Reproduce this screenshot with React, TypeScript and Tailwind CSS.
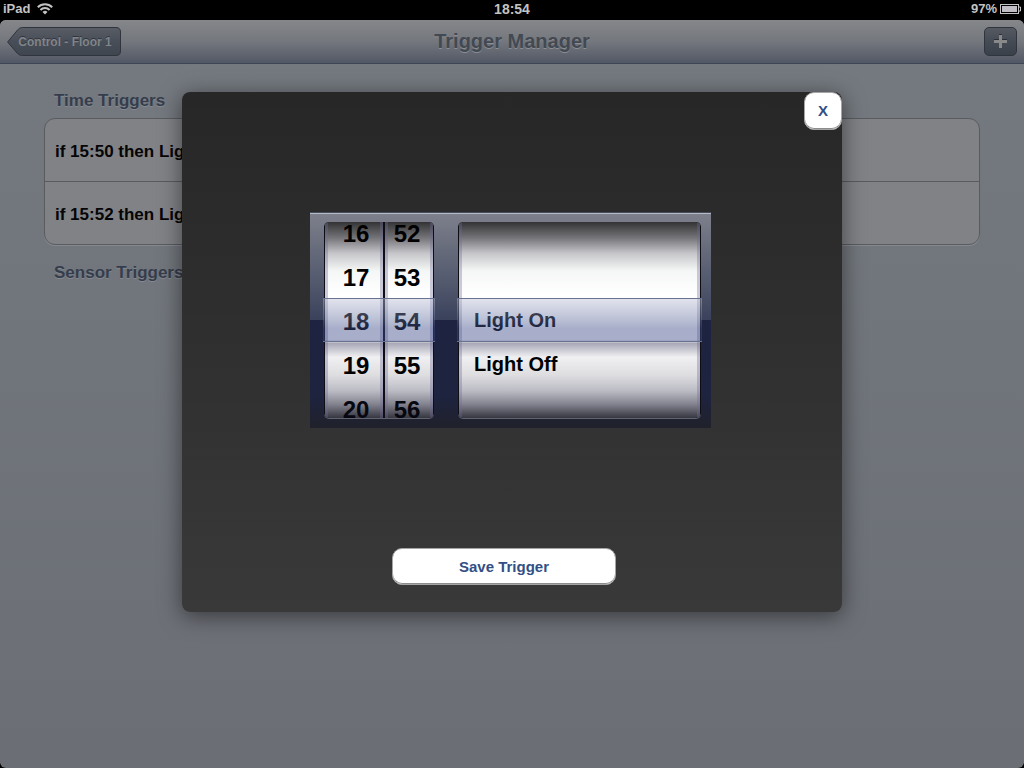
import React, { useState } from "react";

const hours = Array.from({ length: 24 }, (_, i) => String(i).padStart(2, "0"));
const minutes = Array.from({ length: 60 }, (_, i) => String(i).padStart(2, "0"));
const actions = ["Light On", "Light Off"];
const timeTriggers = ["if 15:50 then Light On", "if 15:52 then Light Off"];

function StatusBar() {
  return (
    <div className="flex h-5 items-center bg-black px-[3px] pb-0.5 text-[13px] leading-4 font-bold text-[#c3c3c3]">
      <div className="flex flex-1 items-center gap-[7px]">
        <span>iPad</span>
        <svg width="16" height="12" viewBox="0 0 16 12" fill="none" stroke="#c3c3c3" aria-label="Wi-Fi">
          <path d="M0.8 4.3a10.2 10.2 0 0 1 14.4 0" strokeWidth="2" />
          <path d="M3.4 7a6.5 6.5 0 0 1 9.2 0" strokeWidth="2" />
          <path d="M8 11.6L5.5 9.1a3.5 3.5 0 0 1 5 0Z" fill="#c3c3c3" stroke="none" />
        </svg>
      </div>
      <span className="text-sm leading-4">18:54</span>
      <div className="flex flex-1 items-center justify-end gap-[3px]">
        <span>97%</span>
        <svg width="21" height="10" viewBox="0 0 21 10" aria-label="Battery">
          <rect x="0.5" y="0.5" width="18" height="9" fill="none" stroke="#c3c3c3" />
          <rect x="2" y="2" width="15" height="6" fill="#c0bdc5" />
          <path d="M19 3h1.5v4H19" fill="none" stroke="#c3c3c3" />
        </svg>
      </div>
    </div>
  );
}

function NavBar() {
  return (
    <header className="flex h-11 items-center rounded-t-md border-b border-[#3d4454] bg-linear-to-b from-[#85878a] via-[#74777d] to-[#525866] px-[7px]">
      <div className="flex flex-1">
        <button className="relative h-[30px] w-[114px] pl-0.5 text-xs font-bold text-[#81858a] [text-shadow:0_-1px_0_#30363f]">
          <svg className="absolute inset-0" width="114" height="30" viewBox="0 0 114 30" aria-hidden="true">
            <defs>
              <linearGradient id="back" x1="0" y1="0" x2="0" y2="1">
                <stop offset="0" stopColor="#595d65" />
                <stop offset="0.5" stopColor="#484e58" />
                <stop offset="1" stopColor="#40464f" />
              </linearGradient>
            </defs>
            <path
              d="M0.6 15L10.5 3Q12.4 0.5 15.5 0.5H109Q113.5 0.5 113.5 5V24Q113.5 28.5 109 28.5H15.5Q12.4 28.5 10.5 26.5Z"
              fill="url(#back)"
              stroke="#30343c"
            />
          </svg>
          <span className="relative">Control - Floor 1</span>
        </button>
      </div>
      <h1 className="pb-0.5 text-xl leading-none font-bold text-[#424952] [text-shadow:0_1px_0_#8b8e94]">Trigger Manager</h1>
      <div className="flex flex-1 justify-end">
        <button
          aria-label="Add trigger"
          className="flex h-[29px] w-[33px] items-center justify-center rounded-[5px] border border-[#30343c] bg-linear-to-b from-[#555961] via-[#454b55] to-[#3b414a]"
        >
          <svg width="15" height="15" viewBox="0 0 15 15" aria-hidden="true">
            <path d="M6 0h3v1H6ZM1 5h5v1H1ZM9 5h5v1H9Z" fill="#2b3038" />
            <path d="M6 1h3v5h5v3H9v5H6V9H1V6h5Z" fill="#898989" />
          </svg>
        </button>
      </div>
    </header>
  );
}

interface WheelProps {
  label: string;
  values: string[];
  selected: number;
  onSelect: (index: number) => void;
  className: string;
  itemClassName: string;
}

function Wheel({ label, values, selected, onSelect, className, itemClassName }: WheelProps) {
  return (
    <div
      role="listbox"
      aria-label={label}
      className={`flex h-full flex-col justify-center overflow-hidden border-x-[3px] border-[#6d6a99]/35 bg-[linear-gradient(to_bottom,#333335_0%,#747478_8%,#c6c6ca_16%,#f5f7f6_25%,#ffffff_38%,#ffffff_60%,#a9a9b8_62%,#f0f0f2_69%,#dedee1_78%,#bcbcc5_86%,#83838f_93%,#363641_100%)] bg-origin-border ${className}`}
    >
      {[-2, -1, 0, 1, 2].map((offset) => {
        const index = selected + offset;
        return values[index] === undefined ? (
          <div key={offset} className="h-11 shrink-0" />
        ) : (
          <button
            key={offset}
            role="option"
            aria-selected={offset === 0}
            onClick={() => onSelect(index)}
            className={`h-11 shrink-0 font-bold ${offset === 2 ? "text-[#07070f]" : "text-black"} ${itemClassName}`}
          >
            {values[index]}
          </button>
        );
      })}
    </div>
  );
}

function WheelFrame({ className, children }: { className: string; children: React.ReactNode }) {
  return (
    <div className={`relative h-[196px] ${className}`}>
      <div className="flex h-full gap-0.5 overflow-hidden rounded-[5px] bg-[#0e0e14] px-px shadow-[0_1px_0_#60636f]">{children}</div>
      <div className="pointer-events-none absolute -inset-x-px top-[76px] h-11 border-y border-[#687391] bg-[linear-gradient(to_bottom,rgba(190,192,215,0.45),rgba(110,122,165,0.45)_45%,rgba(62,76,138,0.45)_70%)]" />
    </div>
  );
}

function TriggerPicker() {
  const [hour, setHour] = useState(18);
  const [minute, setMinute] = useState(54);
  const [action, setAction] = useState(0);
  return (
    <div className="mt-[120px] ml-32 flex h-[216px] w-[401px] items-start gap-6 border-t border-[#484d5c] bg-[linear-gradient(to_bottom,#7e808c_0%,#656a7a_18%,#4f566b_35%,#39415b_50%,#1d2340_50%,#1e233f_85%,#20212b_100%)] pt-[9px] pr-2.5 pl-3.5 shadow-[inset_0_1px_0_#b4bac8]">
      <WheelFrame className="w-[110px]">
        <Wheel label="Hour" values={hours} selected={hour} onSelect={setHour} className="w-[58px]" itemClassName="pt-1 pl-1 text-2xl" />
        <Wheel label="Minute" values={minutes} selected={minute} onSelect={setMinute} className="w-12" itemClassName="pt-1 pr-1 text-2xl" />
      </WheelFrame>
      <WheelFrame className="flex-1">
        <Wheel label="Action" values={actions} selected={action} onSelect={setAction} className="flex-1" itemClassName="pl-3 text-left text-xl" />
      </WheelFrame>
    </div>
  );
}

function TriggerDialog({ onClose }: { onClose: () => void }) {
  const button =
    "rounded-[10px] border border-[#a5a5a5] bg-white text-[15px] font-bold text-[#324f85] shadow-[inset_0_-1px_0_#8c8c8c]";
  return (
    <div className="absolute inset-0 flex items-start justify-center pt-[92px]">
      <div
        role="dialog"
        aria-label="New trigger"
        className="relative flex h-[520px] w-[660px] flex-col rounded-lg bg-linear-to-b from-[#272727] to-[#393939] shadow-[0_4px_22px_rgba(0,0,0,0.5)]"
      >
        <button aria-label="Close" onClick={onClose} className={`absolute top-0 right-0 size-[38px] ${button}`}>
          X
        </button>
        <TriggerPicker />
        <button onClick={onClose} className={`mt-[120px] ml-[210px] h-[37px] w-56 pt-0.5 ${button}`}>
          Save Trigger
        </button>
      </div>
    </div>
  );
}

export default function App() {
  const [open, setOpen] = useState(true);
  const heading = "px-2.5 text-[17px] leading-5 font-bold text-[#353d4c] [text-shadow:0_1px_0_#858a91]";
  return (
    <div className="relative flex min-h-screen flex-col bg-black font-['Liberation_Sans',Arial,sans-serif]">
      <StatusBar />
      <div className="flex flex-1 flex-col rounded-md bg-linear-to-b from-[#757a80] to-[#6b6e75]">
        <NavBar />
        <main className="px-11 pt-[27px]">
          <h2 className={heading}>Time Triggers</h2>
          <ul className="mt-[7px] mb-[18px] divide-y divide-[#595b5f] rounded-[11px] border border-[#595b5f] bg-[#818286] shadow-[0_1px_0_#858a90]">
            {timeTriggers.map((trigger) => (
              <li key={trigger} className="box-content flex h-[58px] items-center px-2.5 pt-1 text-[17px] font-bold text-[#050507]">
                {trigger}
              </li>
            ))}
          </ul>
          <h2 className={heading}>Sensor Triggers</h2>
        </main>
      </div>
      {open && <TriggerDialog onClose={() => setOpen(false)} />}
    </div>
  );
}
